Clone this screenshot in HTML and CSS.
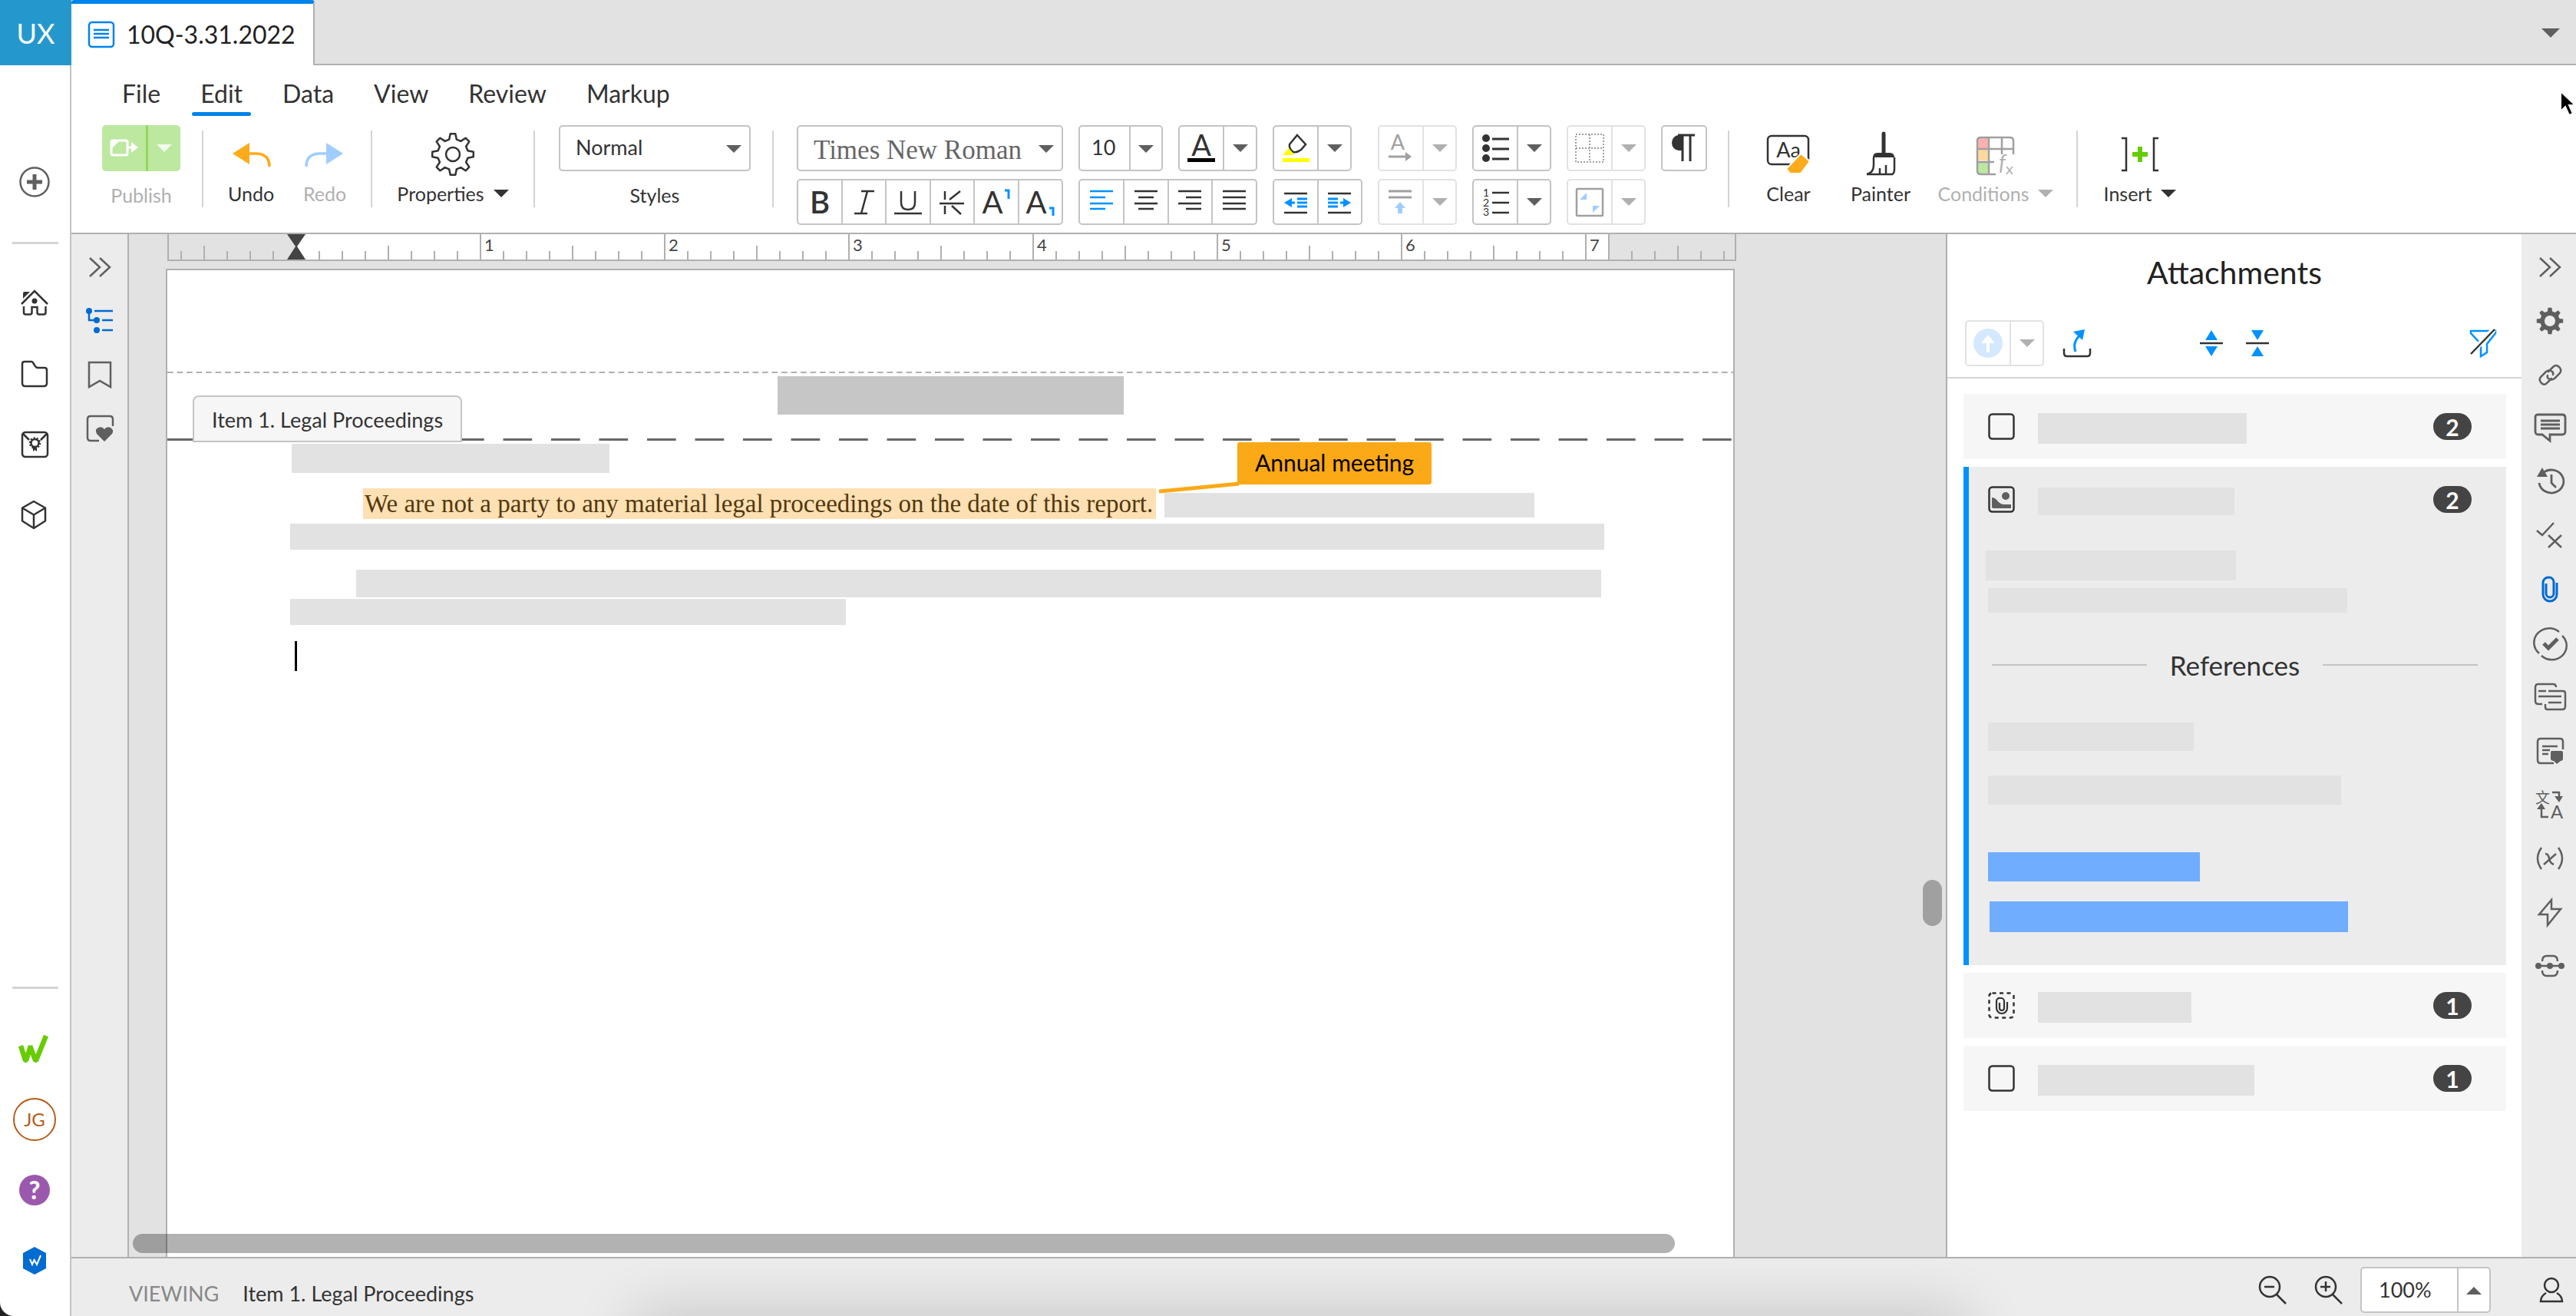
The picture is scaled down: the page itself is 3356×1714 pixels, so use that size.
FILE: index.html
```html
<!DOCTYPE html>
<html lang="en">
<head>
<meta charset="utf-8">
<title>10Q-3.31.2022</title>
<link rel="stylesheet" href="styles.css">
</head>
<body>
<svg class="sprite" aria-hidden="true">
  <symbol id="caret" viewBox="0 0 20 10"><path d="M0 0h20L10 10z" fill="currentColor"/></symbol>
  <symbol id="gear" viewBox="-29 -29 58 58"><path d="M19.4-4.8 26.8-3.3V3.3L19.4 4.8 17.1 10.3 21.3 16.6 16.6 21.3 10.3 17.1 4.8 19.4 3.3 26.8H-3.3L-4.8 19.4-10.3 17.1-16.6 21.3-21.3 16.6-17.1 10.3-19.4 4.8-26.8 3.3V-3.3L-19.4-4.8-17.1-10.3-21.3-16.6-16.6-21.3-10.3-17.1-4.8-19.4-3.3-26.8H3.3L4.8-19.4 10.3-17.1 16.6-21.3 21.3-16.6 17.1-10.3z"/><circle r="9"/></symbol>
  <symbol id="chevrons" viewBox="0 0 40 40"><path d="M7 8l13 12L7 32M20 8l13 12-13 12" fill="none" stroke="currentColor" stroke-width="2.5"/></symbol>
  <symbol id="clip" viewBox="0 0 40 40"><path d="M15 12v13a5 5 0 0 0 10 0V10a6 6 0 0 0-6-6h-1a7 7 0 0 0-7 7v15a9 9 0 0 0 18 0V11" fill="none" stroke="currentColor" stroke-width="3"/></symbol>
  <symbol id="wmark" viewBox="0 0 40 36"><path d="M3 14l6 19h1l6-19M15 14l7 19h1L36 1" fill="none" stroke="currentColor" stroke-width="6.5" stroke-linejoin="bevel"/></symbol>
</svg>

<div class="app">
  <nav class="rail" aria-label="Global">
    <a class="brand" href="#">UX</a>
    <div class="rail-top">
      <button class="rail-btn soft" aria-label="Create"><svg width="40" height="40" viewBox="0 0 40 40"><circle cx="20" cy="20" r="18.500" fill="none" stroke="currentColor" stroke-width="2.500"/><path d="M20 10v20M10 20h20" stroke="currentColor" stroke-width="5"/></svg></button>
    </div>
    <hr>
    <div class="rail-mid">
      <button class="rail-btn" aria-label="Home"><svg width="40" height="40" viewBox="0 0 40 40" fill="none" stroke="currentColor" stroke-width="2.500"><path d="M3 21L20 4l17 17M6 24v8q0 2.500 2.500 2.500H14q2.500 0 2.500-2.500v-7h7v7q0 2.500 2.500 2.500h6q2.500 0 2.500-2.500v-8"/><circle cx="20" cy="17" r="3.500" fill="currentColor" stroke="none"/><path d="M5 14V7q0-2 2-2h7z" fill="currentColor" stroke="none"/></svg></button>
      <button class="rail-btn" aria-label="Files"><svg width="40" height="40" viewBox="0 0 40 40" fill="none" stroke="currentColor" stroke-width="2.500"><path d="M4 7q0-3 3-3h9c3 0 4 8 8 8h9q3 0 3 3v17q0 4-4 4H8q-4 0-4-4z"/></svg></button>
      <button class="rail-btn" aria-label="Certifications"><svg width="40" height="40" viewBox="0 0 40 40" fill="none" stroke="currentColor" stroke-width="2.500"><rect x="4" y="4" width="33" height="32" rx="4"/><path d="M5 6l8 8M36 6l-8 8"/><circle cx="20.500" cy="18" r="5"/><circle cx="20.500" cy="18" r="6.500" stroke-dasharray="2 2"/><path d="M18 23h5v6l-2.500-2L18 29z" fill="currentColor" stroke="none"/></svg></button>
      <button class="rail-btn" aria-label="Packages"><svg width="40" height="40" viewBox="0 0 40 40" fill="none" stroke="currentColor" stroke-width="2.500" stroke-linejoin="round"><path d="M19 2l15 8.500v17L19 37 4 27.500v-17zM4 10.500l15 9 15-9M19 19.500V37"/></svg></button>
    </div>
    <hr class="low">
    <div class="rail-end">
      <button class="rail-btn green" aria-label="Workspace"><svg width="40" height="36"><use href="#wmark"/></svg></button>
      <button class="rail-btn"><span class="avatar">JG</span></button>
      <button class="rail-btn"><span class="help">?</span></button>
      <button class="rail-btn" aria-label="Platform"><svg width="32" height="36" viewBox="0 0 32 36"><path d="M16 0l15 8v20L16 36 1 28V8z" fill="#006bd1"/><path d="M10 16l3 7 3-7M15 16l4 7 5-12" fill="none" stroke="#fff" stroke-width="2"/></svg></button>
    </div>
  </nav>

  <div class="main">
    <header class="tabs">
      <button class="doc-tab"><svg width="36" height="36" viewBox="0 0 36 36" fill="none" stroke="#0083ea" stroke-width="2.500"><rect x="2" y="2" width="32" height="32" rx="4"/><path d="M8 12h20M8 17h20M8 22h20"/></svg><span>10Q-3.31.2022</span></button>
      <button class="tabs-more" aria-label="More tabs"><svg width="26" height="12"><use href="#caret"/></svg></button>
    </header>

    <nav class="menu" aria-label="Menu">
      <button>File</button><button class="on">Edit</button><button>Data</button><button>View</button><button>Review</button><button>Markup</button>
    </nav>

    <div class="ribbon">
      <div class="stack publish">
        <div class="pub">
          <button disabled aria-label="Publish"><svg width="40" height="26" viewBox="0 0 40 26" fill="none" stroke="#fff" stroke-width="3"><rect x="3" y="3" width="21" height="19" rx="2"/><path d="M4 13L13 4H4zM38 12l-9-7v14z" fill="#fff" stroke="none"/><path d="M24 12h6"/></svg></button>
          <button disabled aria-label="Publish options"><svg width="20" height="10"><use href="#caret"/></svg></button>
        </div>
        <span class="label dim">Publish</span>
      </div>
      <i class="rule"></i>
      <div class="pair">
        <button class="tool"><svg width="60" height="60" viewBox="0 0 60 60"><path d="M6 29L28 15v28z" fill="#fdab1a"/><path d="M26 29h10q18 0 18 17" fill="none" stroke="#fdab1a" stroke-width="3.500"/></svg><span>Undo</span></button>
        <button class="tool" disabled><svg width="60" height="60" viewBox="0 0 60 60"><path d="M54 29L32 15v28z" fill="#a0cdff"/><path d="M34 29H24Q6 29 6 46" fill="none" stroke="#a0cdff" stroke-width="3.500"/></svg><span>Redo</span></button>
      </div>
      <i class="rule"></i>
      <button class="tool props"><svg width="58" height="60" fill="none" stroke="#333" stroke-width="2.500" stroke-linejoin="round"><use href="#gear"/></svg><span>Properties <svg width="20" height="10"><use href="#caret"/></svg></span></button>
      <i class="rule"></i>
      <div class="stack styles">
        <span class="pick"><select id="style"><option>Normal</option></select><svg width="20" height="10"><use href="#caret"/></svg></span>
        <label class="label" for="style">Styles</label>
      </div>
      <i class="rule"></i>

      <div class="format">
        <span class="pick serif"><select aria-label="Font"><option>Times New Roman</option></select><svg width="20" height="10"><use href="#caret"/></svg></span>
        <span class="pick size"><select aria-label="Font size"><option>10</option></select><svg width="20" height="10"><use href="#caret"/></svg></span>
        <div class="seg"><button aria-label="Text color"><svg width="44" height="50" viewBox="0 0 44 50"><text x="22" y="35" text-anchor="middle" font-size="38">A</text><rect x="4" y="38" width="36" height="5" fill="#000"/></svg></button><button class="more" aria-label="Text colors"><svg width="20" height="10"><use href="#caret"/></svg></button></div>
        <div class="seg hl"><button aria-label="Highlight"><svg width="44" height="50" viewBox="0 0 44 50"><path d="M24 8l11 12-6 7q-5 4-10 3-6-4-5-10z" fill="none" stroke="#333" stroke-width="2.500"/><path d="M13 25l6 7v2H5z" fill="#ff0"/><rect x="5" y="38" width="35" height="5" fill="#ff0"/></svg></button><button class="more" aria-label="Highlight colors"><svg width="20" height="10"><use href="#caret"/></svg></button></div>
        <div class="seg off"><button disabled aria-label="Text direction"><svg width="44" height="50" viewBox="0 0 44 50"><text x="18" y="27" text-anchor="middle" font-size="27">A</text><path d="M6 36h25" stroke="#a0a0a0" stroke-width="3"/><path d="M28 30l8 6-8 6z" fill="#a0a0a0"/></svg></button><button class="more" disabled aria-label="Text directions"><svg width="20" height="10"><use href="#caret"/></svg></button></div>
        <div class="seg"><button aria-label="Bulleted list"><svg width="44" height="50" viewBox="0 0 44 50"><g fill="#333"><circle cx="10" cy="12" r="5"/><circle cx="10" cy="25" r="5"/><circle cx="10" cy="38" r="5"/></g><path d="M18 13h22M18 26h22M18 39h22" stroke="#333" stroke-width="3"/></svg></button><button class="more" aria-label="Bullet styles"><svg width="20" height="10"><use href="#caret"/></svg></button></div>
        <div class="seg off"><button disabled aria-label="Borders"><svg width="44" height="50" viewBox="0 0 44 50"><path d="M4 7h36v36H4zM4 25h36M22 7v36" fill="none" stroke="#a0a0a0" stroke-width="2" stroke-dasharray="2 2"/></svg></button><button class="more" disabled aria-label="Border styles"><svg width="20" height="10"><use href="#caret"/></svg></button></div>
        <div class="seg one"><button aria-label="Formatting marks"><svg width="44" height="50" viewBox="0 0 44 50"><path d="M20 8h-5a9 10 0 0 0 0 20h5z" fill="#333"/><path d="M14 8h22M20 8v34M30 8v34" fill="none" stroke="#333" stroke-width="3"/></svg></button></div>

        <div class="seg even"><button aria-label="Bold"><svg width="44" height="50" viewBox="0 0 44 50"><text x="22" y="40" text-anchor="middle" font-size="40" font-weight="600">B</text></svg></button><button aria-label="Italic"><svg width="44" height="50" viewBox="0 0 44 50"><path d="M19 11h17M10 40h17M27 11l-8 29" stroke="#333" stroke-width="2.500"/></svg></button><button aria-label="Underline"><svg width="44" height="50" viewBox="0 0 44 50"><path d="M13 11v15q0 9 9 9t9-9V11M4 40h36" fill="none" stroke="#333" stroke-width="2.500"/></svg></button><button aria-label="Strikethrough"><svg width="44" height="50" viewBox="0 0 44 50"><path d="M13 11v11M13 30v11M33 11L19 22M22 30l12 11M6 27h32" fill="none" stroke="#333" stroke-width="2.500"/></svg></button><button aria-label="Superscript"><svg width="44" height="50" viewBox="0 0 44 50"><text x="17" y="40" text-anchor="middle" font-size="40">A</text><path d="M33 10h5v11" fill="none" stroke="#0092ff" stroke-width="3"/></svg></button><button aria-label="Subscript"><svg width="44" height="50" viewBox="0 0 44 50"><text x="17" y="40" text-anchor="middle" font-size="40">A</text><path d="M34 33h5v10" fill="none" stroke="#0092ff" stroke-width="3"/></svg></button></div>
        <div class="seg even wide"><button aria-label="Align left"><svg width="44" height="50" viewBox="0 0 44 50" stroke="#0092ff" stroke-width="2.500"><path d="M7 11h30M7 19h20M7 27h30M7 34h20"/></svg></button><button aria-label="Align center"><svg width="44" height="50" viewBox="0 0 44 50" stroke="#333" stroke-width="2.500"><path d="M7 11h30M12 19h20M7 27h30M12 34h20"/></svg></button><button aria-label="Align right"><svg width="44" height="50" viewBox="0 0 44 50" stroke="#333" stroke-width="2.500"><path d="M7 11h30M17 19h20M7 27h30M17 34h20"/></svg></button><button aria-label="Justify"><svg width="44" height="50" viewBox="0 0 44 50" stroke="#333" stroke-width="2.500"><path d="M7 11h30M7 19h30M7 27h30M7 34h30"/></svg></button></div>
        <div class="seg even"><button aria-label="Outdent"><svg width="44" height="50" viewBox="0 0 44 50"><path d="M7 14h30M7 39h30" stroke="#333" stroke-width="2.500"/><path d="M24 21h13M24 26h13M24 31h13M14 26h7" stroke="#0092ff" stroke-width="3"/><path d="M7 26l10-6v12z" fill="#0092ff"/></svg></button><button aria-label="Indent"><svg width="44" height="50" viewBox="0 0 44 50"><path d="M7 14h30M7 39h30" stroke="#333" stroke-width="2.500"/><path d="M7 21h13M7 26h13M7 31h13M23 26h7" stroke="#0092ff" stroke-width="3"/><path d="M37 26l-10-6v12z" fill="#0092ff"/></svg></button></div>
        <div class="seg off"><button disabled aria-label="Vertical align"><svg width="44" height="50" viewBox="0 0 44 50"><path d="M6 11h30M6 19h30" stroke="#a0a0a0" stroke-width="3"/><path d="M21 25l7 8h-4v7h-6v-7h-4z" fill="#a0cdff"/></svg></button><button class="more" disabled aria-label="Vertical aligns"><svg width="20" height="10"><use href="#caret"/></svg></button></div>
        <div class="seg"><button aria-label="Numbered list"><svg width="44" height="50" viewBox="0 0 44 50"><g font-size="14"><text x="6" y="18">1</text><text x="6" y="31">2</text><text x="6" y="43">3</text></g><path d="M18 13h22M18 26h22M18 39h22" stroke="#333" stroke-width="2.500"/></svg></button><button class="more" aria-label="Number styles"><svg width="20" height="10"><use href="#caret"/></svg></button></div>
        <div class="seg off"><button disabled aria-label="Fit"><svg width="44" height="50" viewBox="0 0 44 50"><rect x="5" y="8" width="34" height="35" rx="1" fill="none" stroke="#a0a0a0" stroke-width="2.500"/><path d="M9 22l9-9v9zM35 30l-9 9v-9z" fill="#a0cdff"/></svg></button><button class="more" disabled aria-label="Fit options"><svg width="20" height="10"><use href="#caret"/></svg></button></div>
      </div>
      <i class="rule"></i>
      <div class="trio">
        <button class="tool"><svg width="60" height="60" viewBox="0 0 60 60"><rect x="3" y="6" width="53" height="37" rx="5" fill="none" stroke="#333" stroke-width="2.500"/><text x="30" y="34" text-anchor="middle" font-size="27">Aa</text><path d="M46 29l12 10-12 16H32l-5-6z" fill="#fdab1a" stroke="#fff" stroke-width="2"/></svg><span>Clear</span></button>
        <button class="tool painter"><svg width="60" height="60" viewBox="0 0 60 60"><path d="M34 3v26" stroke="#333" stroke-width="5" stroke-linecap="round"/><path d="M20 34q0-6 6-6h16q6 0 6 6z" fill="#333"/><path d="M21 34v10q0 10-9 12h33q3-1 3-7V34M29 55v-7M37 55V44" fill="none" stroke="#333" stroke-width="2.500"/></svg><span>Painter</span></button>
        <button class="tool wide" disabled><svg width="60" height="60" viewBox="0 0 60 60"><path d="M7 9h14v13H7z" fill="#ffb0b0"/><path d="M7 24h14v14H7z" fill="#ffd9a0"/><path d="M7 40h14v15H7z" fill="#bde8a0"/><path d="M30 56H11q-5 0-5-4V12q0-4 5-4h37q5 0 5 4v18M6 23h47M6 40h22M21 8v47M38 8v22" fill="none" stroke="#a0a0a0" stroke-width="2.500"/><text x="34" y="51" font-size="28" font-style="italic">f</text><text x="43" y="56" font-size="20">x</text></svg><span>Conditions <svg width="20" height="10"><use href="#caret"/></svg></span></button>
      </div>
      <i class="rule"></i>
      <button class="tool insert"><svg width="60" height="60" viewBox="0 0 60 60"><path d="M6 9h6v42H6M54 9h-6v42h6" fill="none" stroke="#333" stroke-width="2.500"/><path d="M30 20v20M20 30h20" stroke="#6c0" stroke-width="6"/></svg><span>Insert <svg width="20" height="10"><use href="#caret"/></svg></span></button>
    </div>

    <div class="workspace">
      <aside class="side">
        <button aria-label="Expand"><svg width="40" height="40"><use href="#chevrons"/></svg></button>
        <button class="active" aria-label="Outline"><svg width="40" height="40" viewBox="0 0 40 40"><g fill="currentColor"><circle cx="6" cy="7" r="4"/><circle cx="16" cy="19" r="4"/><circle cx="16" cy="32" r="4"/></g><path d="M6 7v12h10M13 7h24M23 19h14M23 32h14" fill="none" stroke="currentColor" stroke-width="2.500"/></svg></button>
        <button aria-label="Bookmarks"><svg width="40" height="40" viewBox="0 0 40 40"><path d="M6 4h28v32l-14-8-14 8z" fill="none" stroke="currentColor" stroke-width="2.500"/></svg></button>
        <button aria-label="Favorites"><svg width="40" height="40" viewBox="0 0 40 40"><path d="M19 36H8q-4 0-4-4V8q0-4 4-4h25q4 0 4 4v9" fill="none" stroke="currentColor" stroke-width="2.500"/><path d="M26 37L16 27q-3-6 2-8 5-2 8 2 3-4 8-2 5 3 2 8z" fill="currentColor"/></svg></button>
      </aside>

      <main class="canvas">
        <div class="ruler">
          <div class="pre"><svg class="marker" width="24" height="35" viewBox="0 0 24 35"><path d="M0 0h24L13 16 24 33H0l11-17z" fill="#444"/></svg></div>
          <div class="inch"></div><div class="inch">1</div><div class="inch">2</div><div class="inch">3</div><div class="inch">4</div><div class="inch">5</div><div class="inch">6</div><div class="inch last">7</div>
          <div class="post"></div>
        </div>
        <article class="page">
          <div class="page-top"></div>
          <div class="page-head"><div class="block"></div><div class="section-tab">Item 1. Legal Proceedings</div></div>
          <div class="page-body">
            <div class="bar lead"></div>
            <p class="sentence"><mark>We are not a party to any material legal proceedings on the date of this report.</mark><span class="bar"></span></p>
            <div class="bar full"></div>
            <div class="bar indent"></div>
            <div class="bar short"></div>
            <div class="cursor"></div>
            <svg class="leader" width="104" height="16" viewBox="0 0 104 16"><path d="M0 12L104 2" stroke="#fba916" stroke-width="5"/></svg>
            <div class="tag">Annual meeting</div>
          </div>
        </article>
        <div class="hthumb"></div>
        <div class="vthumb"></div>
      </main>

      <section class="panel">
        <h2>Attachments</h2>
        <div class="panel-tools">
          <div class="seg off"><button disabled aria-label="Upload"><svg width="38" height="38" viewBox="0 0 38 38"><circle cx="19" cy="19" r="19" fill="#d4e8ff"/><path d="M19 8l9 11h-7v12h-4V19h-7z" fill="#fff"/></svg></button><button class="more" disabled aria-label="Upload options"><svg width="20" height="10"><use href="#caret"/></svg></button></div>
          <button class="pt share" aria-label="Share"><svg width="40" height="40" viewBox="0 0 40 40"><path d="M3 27v6q0 4 4 4h26q4 0 4-4v-6" fill="none" stroke="#333" stroke-width="2.500"/><path d="M18 31q-5-14 9-24" fill="none" stroke="#0092ff" stroke-width="3"/><path d="M30 2l-15 3 12 11z" fill="#0092ff"/></svg></button>
          <button class="pt expand" aria-label="Expand all"><svg width="40" height="40" viewBox="0 0 40 40"><path d="M5 20h30" stroke="#333" stroke-width="2.500"/><path d="M20 3l8 13H12zM20 37l8-13H12z" fill="#0092ff"/></svg></button>
          <button class="pt" aria-label="Collapse all"><svg width="40" height="40" viewBox="0 0 40 40"><path d="M5 20h30" stroke="#333" stroke-width="2.500"/><path d="M20 16l8-13H12zM20 24l8 13H12z" fill="#0092ff"/></svg></button>
          <button class="pt filter" aria-label="Clear filter"><svg width="40" height="40" viewBox="0 0 40 40"><path d="M4 4h32v3L25 21v11l-8 5V21L4 7z" fill="none" stroke="#0092ff" stroke-width="2.500"/><path d="M34 2L4 33" stroke="#fff" stroke-width="7"/><path d="M35 2L4 34" stroke="#333" stroke-width="2.500"/></svg></button>
        </div>
        <div class="cards">
          <div class="card"><div class="card-head"><svg width="35" height="35" viewBox="0 0 35 35"><rect x="1.500" y="1.500" width="32" height="32" rx="4" fill="none" stroke="#333" stroke-width="2.500"/></svg><div class="bar" style="width:272px"></div><span class="badge">2</span></div></div>
          <div class="card open">
            <div class="card-head"><svg width="35" height="35" viewBox="0 0 35 35"><rect x="1.500" y="1.500" width="32" height="32" rx="4" fill="none" stroke="#333" stroke-width="2.500"/><circle cx="23" cy="13" r="5" fill="#5f5f5f"/><path d="M5 15q4 0 7 4 4 5 9 5h9v5H7q-2 0-2-2z" fill="#5f5f5f"/></svg><div class="bar" style="width:256px"></div><span class="badge">2</span></div>
            <div class="card-body">
              <div class="bar a"></div><div class="bar b"></div>
              <h3>References</h3>
              <div class="bar c"></div><div class="bar d"></div>
              <a class="bar e" href="#" aria-label="Reference 1"></a><a class="bar f" href="#" aria-label="Reference 2"></a>
            </div>
          </div>
          <div class="card"><div class="card-head"><svg width="35" height="35" viewBox="0 0 35 35"><rect x="1.500" y="1.500" width="32" height="32" rx="4" fill="none" stroke="#333" stroke-width="2.500" stroke-dasharray="5 4.500"/><path d="M15 14v7a3 3 0 0 0 6 0v-9a4 4 0 0 0-4-4h-1a4 4 0 0 0-5 4v9a7 7 0 0 0 14 0v-8" fill="none" stroke="#333" stroke-width="2.200"/></svg><div class="bar" style="width:200px"></div><span class="badge">1</span></div></div>
          <div class="card"><div class="card-head"><svg width="35" height="35" viewBox="0 0 35 35"><rect x="1.500" y="1.500" width="32" height="32" rx="4" fill="none" stroke="#333" stroke-width="2.500"/></svg><div class="bar" style="width:282px"></div><span class="badge">1</span></div></div>
        </div>
      </section>

      <aside class="side right">
        <button aria-label="Collapse"><svg width="40" height="40"><use href="#chevrons"/></svg></button>
        <button aria-label="Settings"><svg width="36" height="36" viewBox="-28 -28 56 56"><path fill="currentColor" fill-rule="evenodd" d="M19.400-4.800 26.800-3.800V3.800L19.400 4.800 17.100 10.300 21.300 16.600 16.600 21.300 10.300 17.100 4.800 19.400 3.800 26.800H-3.800L-4.800 19.400-10.300 17.100-16.600 21.300-21.300 16.600-17.100 10.300-19.400 4.800-26.800 3.800V-3.800L-19.400-4.800-17.100-10.300-21.300-16.600-16.600-21.300-10.300-17.100-4.800-19.400-3.800-26.800H3.800L4.800-19.400 10.300-17.100 16.600-21.300 21.300-16.600 17.100-10.300zM-11 0a11 11 0 1 0 22 0a11 11 0 1 0-22 0z"/></svg></button>
        <button aria-label="Links"><svg width="40" height="40" viewBox="0 0 40 40" fill="none" stroke="currentColor" stroke-width="2.500" stroke-linecap="round"><path d="M18 16l6-6q4-4 8 0t1 8l-7 7q-4 3-8 0-2-2-1-4"/><path d="M22 25l-5 5q-4 5-8 1t-1-8l7-7q4-3 8 0 2 2 1 4"/></svg></button>
        <button aria-label="Comments"><svg width="44" height="44" viewBox="0 0 44 44" fill="none" stroke="currentColor" stroke-width="2.800"><path d="M6 4h32q4 0 4 4v18q0 4-4 4H22v8l-10-8H7q-4 0-4-4V8q0-4 3-4zM10 12h25M10 17h25M10 22h25"/></svg></button>
        <button aria-label="History"><svg width="40" height="40" viewBox="0 0 40 40" fill="none" stroke="currentColor" stroke-width="2.800"><path d="M11 8a16 15 0 1 1-5 13M22 10v11l6 6"/><path d="M10 1l7 12H3z" fill="currentColor" stroke="none"/></svg></button>
        <button aria-label="Checks"><svg width="40" height="40" viewBox="0 0 40 40" fill="none" stroke="currentColor" stroke-width="2.500"><path d="M3 13l7 6L25 3M18 19l17 16M35 19L18 35"/></svg></button>
        <button class="active" aria-label="Attachments"><svg width="40" height="40"><use href="#clip"/></svg></button>
        <button aria-label="Approvals"><svg width="44" height="44" viewBox="0 0 44 44" fill="none" stroke="currentColor"><g stroke-width="2.500"><path d="M8 35A19 18 0 0 1 34 7M38 12a19 18 0 0 1-27 26"/></g><path d="M14 22l6 6 12-12" stroke-width="5"/></svg></button>
        <button aria-label="Threads"><svg width="44" height="44" viewBox="0 0 44 44" fill="none" stroke="currentColor" stroke-width="2.500"><path d="M12 31H7q-4 0-4-4V9q0-4 4-4h19q4 0 4 4M16 31v4q0 3 3 3h19q4 0 4-4V17q0-3-3-3H20M7 14h10M7 21h30M20 29h17"/></svg></button>
        <button aria-label="Notes"><svg width="40" height="40" viewBox="0 0 40 40" fill="none" stroke="currentColor" stroke-width="2.500"><path d="M25 36H8q-4 0-4-4V8q0-4 4-4h25q4 0 4 4v10M10 14h20M10 19h10M10 24h8"/><path d="M22 20h13q2 0 2 2v8q0 3-3 3l-5 4-4-4q-4 0-4-3v-7q0-3 1-3z" fill="currentColor" stroke="none"/></svg></button>
        <button aria-label="Translate"><svg width="40" height="40" viewBox="0 0 40 40"><g fill="currentColor"><text class="cjk" x="1" y="18" font-size="19">文</text><text x="21" y="38" font-size="24">A</text><path d="M26 9h11l-5 8zM3 26h11l-5-8z"/></g><path d="M23 4h9v7M9 24v12h9" fill="none" stroke="currentColor" stroke-width="2.500"/></svg></button>
        <button aria-label="Variables"><svg width="40" height="40" viewBox="0 0 40 40" fill="none" stroke="currentColor" stroke-width="2.500"><path d="M9 6q-10 14 0 28M31 6q10 14 0 28M28 14L12 28M14 14q4 0 5 6t6 8"/></svg></button>
        <button aria-label="Automation"><svg width="40" height="40" viewBox="0 0 40 40"><path d="M22 4L6 23h11v14l17-21H22z" fill="none" stroke="currentColor" stroke-width="2.500"/></svg></button>
        <button aria-label="Flow"><svg width="40" height="40" viewBox="0 0 40 40" fill="none" stroke="currentColor" stroke-width="2.500"><path d="M10 14q0-7 6-7h8q6 0 6 7M10 26q0 7 6 7h8q6 0 6-7M4 20h32"/><g fill="currentColor" stroke="none"><circle cx="5" cy="20" r="4"/><circle cx="20" cy="20" r="4"/><circle cx="35" cy="20" r="4"/></g></svg></button>
      </aside>
    </div>

    <footer class="status">
      <span class="mode">VIEWING</span><span class="where">Item 1. Legal Proceedings</span>
      <div class="zoom">
        <button aria-label="Zoom out"><svg width="40" height="40" viewBox="0 0 40 40" fill="none" stroke="#333" stroke-width="2.500"><circle cx="16" cy="16" r="13"/><path d="M25 26l12 12M9 16h13"/></svg></button>
        <button aria-label="Zoom in"><svg width="40" height="40" viewBox="0 0 40 40" fill="none" stroke="#333" stroke-width="2.500"><circle cx="16" cy="16" r="13"/><path d="M25 26l12 12M9 16h13M16 9v13"/></svg></button>
        <span class="pick level"><select aria-label="Zoom level"><option>100%</option></select><svg class="up" width="20" height="10"><use href="#caret"/></svg></span>
        <button class="person" aria-label="People"><svg width="36" height="40" viewBox="0 0 36 40" fill="none" stroke="#333" stroke-width="2.500"><circle cx="18" cy="14" r="9"/><path d="M11 24q-7 4-7 11h28q0-7-7-11"/></svg></button>
      </div>
      <div class="glow"></div>
    </footer>
  </div>
  <svg class="pointer" width="26" height="38" viewBox="0 0 26 38"><path d="M4 3v26l6-6 5 11 5-2-5-11h8z" fill="#000" stroke="#fff" stroke-width="2"/></svg>
</div>
</body>
</html>
```
FILE: styles.css
```css
* { box-sizing: border-box; }
body { margin: 0; background: #222; color: #333; font: 27px/36px Lato, "Noto Sans CJK SC", sans-serif; }
button, select { font: inherit; color: inherit; background: none; border: 0; margin: 0; padding: 0; }
button { display: flex; align-items: center; justify-content: center; }
svg { flex: none; display: block; overflow: visible; }
svg text { fill: currentColor; }
.cjk { font-family: "Noto Sans CJK SC", sans-serif; }
.sprite { position: absolute; width: 0; height: 0; overflow: hidden; }

.app { position: relative; display: flex; height: 100vh; background: #fff; border-radius: 0 0 0 18px; overflow: hidden; }

/* global rail */
.rail { flex: none; display: flex; flex-direction: column; width: 93px; border-right: 2px solid #c4c4c4; }
.brand { display: flex; align-items: center; justify-content: center; height: 85px; margin-right: -2px; background: #2498cd; color: #fff; font-size: 36px; text-decoration: none; }
.rail hr { width: 60px; height: 3px; margin: 0 auto; border: 0; background: #d4d4d4; }
.rail-top { padding: 106px 0 32px; }
.rail-btn { width: 90px; height: 92px; }
.soft { color: #5f5f5f; }
.green { color: #6c0; padding-right: 3px; }
.rail-mid { flex: 1; padding-top: 31px; }
.rail-end { padding: 32px 0 26px; }
.avatar, .help { display: flex; align-items: center; justify-content: center; border-radius: 50%; }
.avatar { width: 56px; height: 56px; border: 2px solid #b65c1a; color: #b65c1a; font-size: 24px; }
.help { width: 40px; height: 40px; background: #9b59ad; color: #fff; font-size: 32px; font-weight: 900; }

.main { flex: 1; min-width: 0; display: flex; flex-direction: column; }

/* document tabs */
.tabs { flex: none; display: flex; justify-content: space-between; height: 85px; background: #e2e2e2; box-shadow: inset 0 -2px #b0b0b0; }
.doc-tab { gap: 15px; padding: 0 23px 0 21px; background: #fff; border-top: 5px solid #0083ea; border-right: 2px solid #b0b0b0; border-radius: 4px 4px 0 0; color: #222; font-size: 32px; }
.tabs-more { padding: 0 20px; color: #5f5f5f; }

/* menu */
.menu { flex: none; display: flex; gap: 30px; height: 66px; padding-left: 55px; font-size: 32px; }
.menu button { padding: 13px 11px 0; border-bottom: 5px solid transparent; }
.menu .on { position: relative; }
.menu .on::after { content: ""; position: absolute; left: 0; right: 0; bottom: -5px; height: 5px; border-radius: 3px; background: #0083ea; }

/* ribbon */
.ribbon { flex: none; display: flex; align-items: flex-start; height: 154px; padding: 12px 0 0 40px; border-bottom: 2px solid #b0b0b0; }
.rule { flex: none; width: 2px; height: 100px; margin-top: 7px; background: #d4d4d4; }
.stack { display: flex; flex-direction: column; align-items: center; gap: 13px; }
.publish { width: 130px; padding-right: 28px; }
.pub { display: flex; width: 102px; height: 60px; border-radius: 5px; background: #bde8a0; color: #f2fbed; }
.pub button { flex: 1; color: inherit; }
.pub button:first-child { flex: none; width: 60px; border-right: 3px solid #90d860; }
.label { font-size: 25px; }
.dim, .tool:disabled { color: #b0b0b0; }
.pair { display: flex; padding: 0 12px 0 14px; }
.pair .tool { width: 96px; }
.tool { flex-direction: column; gap: 3px; padding-top: 8px; font-size: 25px; }
.tool span { display: flex; align-items: center; gap: 12px; }
.props { width: 210px; }
.styles { padding: 0 28px 0 31px; }
.pick { position: relative; display: flex; width: 250px; height: 60px; }
.pick select { width: 100%; padding: 0 0 3px 20px; appearance: none; border: 2px solid #c4c4c4; border-radius: 5px; background: #fff; }
.pick svg { position: absolute; right: 12px; top: 26px; color: #5f5f5f; pointer-events: none; }
.format { display: grid; grid-template-columns: 347px 110px 103px 117px 103px 103px 103px 60px; grid-auto-rows: 60px; gap: 10px 20px; padding: 0 27px 0 30px; }
.format .pick { width: auto; }
.pick.serif select { font-family: "Liberation Serif", serif; font-size: 35px; color: #666; padding: 5px 0 0 20px; }
.pick.size select { padding-left: 15px; }
.size::after, .level::after { content: ""; position: absolute; right: 42px; top: 2px; bottom: 2px; width: 2px; background: #c4c4c4; }
.seg { display: flex; width: 103px; border: 2px solid #c4c4c4; border-radius: 5px; }
.seg button { flex: 1; color: #333; }
.seg button + button { border-left: 2px solid #c4c4c4; }
.seg .more { flex: none; width: 43px; color: #5f5f5f; }
.seg.off, .seg.off button { border-color: #e2e2e2; color: #a0a0a0; }
.seg.off .more { color: #b0b0b0; }
.seg.even, .seg.one { width: auto; }
.seg.wide { grid-column: span 2; }
.trio { display: flex; padding: 0 15px 0 17px; }
.trio .tool { width: 120px; }
.trio .tool.wide { width: 180px; }
.insert { width: 162px; }

/* workspace */
.workspace { flex: 1; min-height: 0; display: flex; background: #e2e2e2; }
.side { flex: none; width: 75px; padding-top: 8px; background: #ececec; border-right: 2px solid #b0b0b0; color: #5f5f5f; }
.side button { width: 100%; height: 70px; }
.side .active { color: #006bd1; }
.right { width: 71px; padding-left: 2px; border: 0; }

.canvas { position: relative; flex: 1; min-width: 0; display: flex; flex-direction: column; overflow: hidden; }
.ruler { flex: none; display: flex; width: 2044px; height: 35px; margin-left: 50px; border: solid #b0b0b0; border-width: 0 2px 2px; background: #fff; font-size: 22px; line-height: 27px; color: #444; }
.inch, .pre, .post {
  --tick: linear-gradient(90deg, #b0b0b0 2px, transparent 2px);
  background-image: var(--tick), var(--tick);
  background-size: 30px 11px, 120px 18px;
  background-repeat: repeat-x, no-repeat;
  background-position: 0 100%, 120px 100%;
}
.inch { flex: none; width: 240px; padding-left: 6px; box-shadow: inset 2px 0 #b0b0b0; }
.inch.last { width: 30px; }
.pre { position: relative; flex: none; width: 165px; background-color: #e2e2e2; background-position: 15px 100%, 45px 100%; }
.post { flex: 1; background-color: #e2e2e2; background-position: 0 100%, 90px 100%; box-shadow: inset 2px 0 #b0b0b0; }
.marker { position: absolute; right: -13px; top: 0; z-index: 1; }

.page { flex: 1; display: flex; flex-direction: column; width: 2044px; margin: 10px 0 0 48px; background: #fff; border: 2px solid #b0b0b0; border-bottom: 0; }
.page-top { height: 134px; background: linear-gradient(90deg, #b0b0b0 8px, transparent 8px) 0 100% / calc(25px / 2) 2px repeat-x; }
.page-head { position: relative; height: 88px; padding-top: 4px; background: linear-gradient(90deg, #666 38px, transparent 38px) 0 100% / calc(125px / 2) 3px repeat-x; }
.block { width: 451px; height: 50px; margin: 0 auto; background: #c6c6c6; }
.section-tab { position: absolute; left: 33px; bottom: -2px; padding: 12px 23px 9px; border: 2px solid #c4c4c4; border-radius: 8px 8px 0 0; background: #f6f6f6; }
.bar { height: 36px; background: #e2e2e2; }
.page-body { position: relative; padding: 4px 0 0 160px; }
.bar.lead { width: 414px; height: 38px; margin-left: 2px; }
.sentence { display: flex; align-items: center; height: 40px; margin: 20px 0 6px 95px; font: 33px/40px "Liberation Serif", serif; white-space: nowrap; }
.sentence mark { padding: 0 4px 0 2px; background: #fde0b4; color: #53380c; }
.sentence .bar { width: 482px; height: 32px; margin: 4px 0 0 11px; }
.bar.full { width: 1712px; height: 34px; }
.bar.indent { width: 1622px; margin: 26px 0 2px 86px; }
.bar.short { width: 724px; height: 34px; }
.cursor { width: 3px; height: 39px; margin: 21px 0 0 6px; background: #000; }
.tag { position: absolute; left: 1394px; top: 2px; padding: 8px 23px 11px; border-radius: 3px; background: #fba916; color: #000; font-size: 30px; }
.leader { position: absolute; left: 1292px; top: 54px; }
.hthumb { position: absolute; left: 5px; right: 353px; bottom: 5px; height: 25px; border-radius: 13px; background: rgba(0, 0, 0, .3); }
.vthumb { position: absolute; right: 5px; top: 841px; width: 25px; height: 60px; border-radius: 13px; background: #a0a0a0; }

/* attachments */
.panel { flex: none; width: 750px; border-left: 2px solid #b0b0b0; background: #fff; }
.panel h2 { margin: 0; color: #222; font-size: 41px; font-weight: 400; line-height: 100px; text-align: center; }
.panel-tools { display: flex; align-items: center; padding: 12px 28px 14px 23px; border-bottom: 2px solid #d4d4d4; }
.panel-tools .seg { height: 60px; }
.pt { width: 44px; height: 60px; }
.share { margin: 0 131px 0 21px; }
.expand { margin-right: 16px; }
.filter { margin-left: auto; }
.cards { display: flex; flex-direction: column; gap: 10px; padding: 20px 20px 0 21px; }
.card { background: #f6f6f6; }
.card.open { background: #ececec; box-shadow: inset 7px 0 #0092ff; }
.card-head { display: flex; align-items: center; gap: 30px; height: 85px; padding: 0 45px 0 32px; }
.card-head .bar { height: 40px; margin-top: 4px; }
.open .card-head .bar { height: 36px; }
.badge { display: flex; align-items: center; justify-content: center; width: 50px; height: 35px; margin-left: auto; border-radius: 18px; background: #444; color: #fff; font-size: 30px; font-weight: 700; }
.card-body { padding: 24px 37px 43px 32px; }
.card-body .bar { display: block; }
.card-body .a { width: 326px; height: 39px; margin-left: -3px; }
.card-body .b { width: 468px; height: 32px; margin-top: 10px; }
.card-body .c { width: 268px; height: 37px; margin-top: 55px; }
.card-body .d { width: 460px; height: 38px; margin-top: 32px; }
.card-body .e { width: 276px; height: 38px; margin-top: 62px; background: #70adff; }
.card-body .f { width: 467px; height: 40px; margin: 26px 0 0 2px; background: #70adff; }
.card-body h3 { display: flex; align-items: center; gap: 30px; margin: 48px 0 0 5px; font-size: 35px; font-weight: 400; line-height: 40px; }
.card-body h3::before, .card-body h3::after { content: ""; flex: 1; height: 2px; background: #c4c4c4; }

/* status bar */
.status { position: relative; flex: none; display: flex; align-items: center; gap: 31px; height: 77px; padding: 0 14px 0 75px; background: #ececec; border-top: 2px solid #b0b0b0; overflow: hidden; }
.mode, .where { padding: 18px 0 2px; }
.mode { color: #888; }
.zoom { display: flex; align-items: center; gap: 33px; margin-left: auto; padding-top: 6px; position: relative; z-index: 1; }
.level { width: 170px; margin-left: -12px; }
.pick.level select { padding: 0 0 0 22px; }
.level .up { transform: scaleY(-1); }
.person { margin-left: 28px; }
.glow { position: absolute; left: 740px; right: 800px; bottom: -44px; height: 30px; border-radius: 20px; box-shadow: 0 0 80px 10px rgba(0, 0, 0, .24); }

.pointer { position: absolute; right: -2px; top: 116px; }
```
